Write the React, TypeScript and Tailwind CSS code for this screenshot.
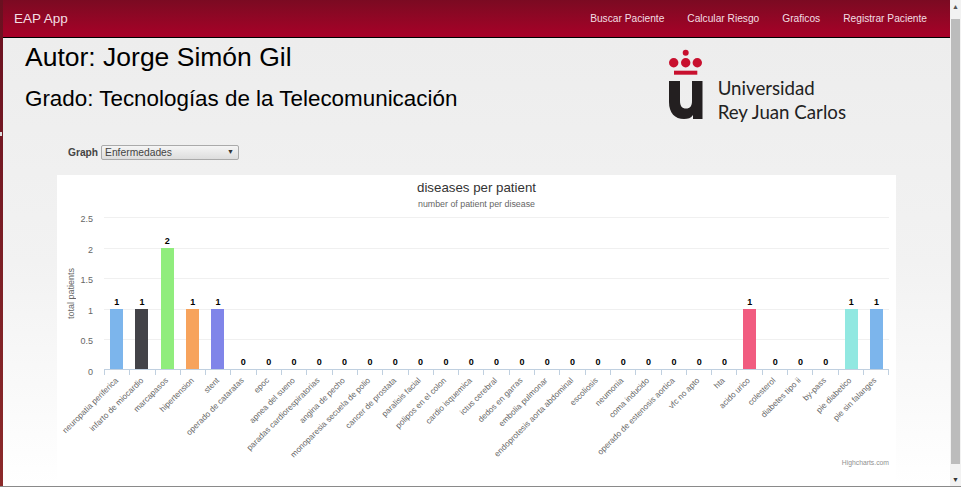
const bars: { name: string; v: number; color?: string; height?: string }[] = [
  { name: 'neuropatia periferica', v: 1, color: 'bg-[#7cb5ec]', height: 'h-[60px]' },
  { name: 'infarto de miocardio', v: 1, color: 'bg-[#434348]', height: 'h-[60px]' },
  { name: 'marcapasos', v: 2, color: 'bg-[#90ed7d]', height: 'h-[121px]' },
  { name: 'hipertension', v: 1, color: 'bg-[#f7a35c]', height: 'h-[60px]' },
  { name: 'stent', v: 1, color: 'bg-[#8085e9]', height: 'h-[60px]' },
  { name: 'operado de cataratas', v: 0 },
  { name: 'epoc', v: 0 },
  { name: 'apnea del sueno', v: 0 },
  { name: 'paradas cardiorespiratorias', v: 0 },
  { name: 'angina de pecho', v: 0 },
  { name: 'monoparesia secuela de polio', v: 0 },
  { name: 'cancer de prostata', v: 0 },
  { name: 'paralisis facial', v: 0 },
  { name: 'polipos en el colon', v: 0 },
  { name: 'cardio isquemica', v: 0 },
  { name: 'ictus cerebral', v: 0 },
  { name: 'dedos en garras', v: 0 },
  { name: 'embolia pulmonar', v: 0 },
  { name: 'endoprotesis aorta abdominal', v: 0 },
  { name: 'escoliosis', v: 0 },
  { name: 'neumonia', v: 0 },
  { name: 'coma inducido', v: 0 },
  { name: 'operado de estenosis aortica', v: 0 },
  { name: 'vfc no apto', v: 0 },
  { name: 'hta', v: 0 },
  { name: 'acido urico', v: 1, color: 'bg-[#f15c80]', height: 'h-[60px]' },
  { name: 'colesterol', v: 0 },
  { name: 'diabetes tipo ii', v: 0 },
  { name: 'by-pass', v: 0 },
  { name: 'pie diabetico', v: 1, color: 'bg-[#91e8e1]', height: 'h-[60px]' },
  { name: 'pie sin falanges', v: 1, color: 'bg-[#7cb5ec]', height: 'h-[60px]' },
];

const ticks = ['2.5', '2', '1.5', '1', '0.5', '0'];

function Chart() {
  return (
    <div className="ml-[54px] w-[839px] h-[311px] bg-white mt-[15px] pt-[5px] flex flex-col">
      <div className="text-center text-[13.3px] leading-[16px] text-[#333333]">diseases per patient</div>
      <div className="text-center text-[8.85px] leading-[12px] text-[#666666] mt-[2px]">number of patient per disease</div>
      <div className="flex mt-[7px]">
        <div className="w-[10px] ml-[9px] h-[153px] flex items-center justify-center">
          <span className="[writing-mode:vertical-rl] rotate-180 text-[9px] leading-[10px] text-[#666666] whitespace-nowrap">total patients</span>
        </div>
        <div className="w-[15px] ml-[2px] h-[163px] flex flex-col justify-between text-right text-[9px] leading-[10px] text-[#666666] mt-[-3px] mb-[-10px]">
          {ticks.map((t) => (
            <span key={t}>{t}</span>
          ))}
        </div>
        <div className="relative ml-[11px] w-[785px]">
          <div className="h-[153px] flex flex-col justify-between">
            {ticks.map((t) => (
              <div key={t} className={t === '0' ? 'h-0' : 'h-px bg-[#f0f0f0]'} />
            ))}
          </div>
          <div className="absolute left-0 top-0 w-full h-[153px] flex items-end border-b border-[#c0d0e0]">
            {bars.map((b) => (
              <div key={b.name} className="flex-1 flex flex-col items-center justify-end h-full">
                <span className="text-[9px] leading-[11px] font-bold text-black mb-[1px]">{b.v}</span>
                {b.v > 0 && <div className={`w-[13px] ${b.color} ${b.height}`} />}
              </div>
            ))}
          </div>
          <div className="absolute left-0 top-[153px] w-full flex border-r border-[#c0d0e0]">
            {bars.map((b) => (
              <div key={b.name} className="relative flex-1 h-[5px] border-l border-[#c0d0e0]">
                <span className="absolute right-[16px] top-[6px] origin-top-right -rotate-45 whitespace-nowrap text-[8.2px] leading-[10px] text-[#666666]">
                  {b.name}
                </span>
              </div>
            ))}
          </div>
        </div>
      </div>
      <div className="mt-auto mb-[18px] pr-[7px] text-right text-[6.8px] leading-[10px] text-[#909090]">Highcharts.com</div>
    </div>
  );
}

function Logo() {
  return (
    <div className="flex items-end gap-[15px]">
      <svg width="34" height="70" viewBox="0 0 34 70">
        <g fill="#c8102e">
          <circle cx="16.7" cy="3.7" r="3" />
          <circle cx="4.7" cy="13.7" r="4.7" />
          <circle cx="16.7" cy="13.7" r="4.7" />
          <circle cx="28.3" cy="13.7" r="4.7" />
          <rect x="5" y="21.7" width="23.3" height="4" />
        </g>
        <path d="M0 32H11V52C11 57 13 59.5 17 59.5C21 59.5 23 57 23 52V32H33.5V70H24V66C22 69 19 70 15 70C6 70 0 64 0 53Z" fill="#231f20" />
      </svg>
      <div className="text-[18.7px] leading-[24px] text-[#222222] font-['Lato',sans-serif] mb-[-5px]">
        <div>Universidad</div>
        <div>Rey Juan Carlos</div>
      </div>
    </div>
  );
}

export default function App() {
  return (
    <div className="relative h-[487px] w-[961px] overflow-hidden flex flex-col font-['Liberation_Sans',Arial,sans-serif] bg-white">
      <div className="flex-1 min-h-0 flex">
        <div className="w-[3px] shrink-0 bg-gradient-to-b from-[#6a1020] to-[#8c2a2a]" />
        <div className="w-[947px] flex flex-col">
          <nav className="h-[38px] shrink-0 flex items-center justify-between bg-gradient-to-b from-[#7b0a22] to-[#a80028] border-b border-black pl-[11px] pr-[23px] pt-[1px]">
            <span className="text-[13.5px] text-[#f3dfe3]">EAP App</span>
            <div className="flex gap-[23px] text-[10.2px] text-[#f3dfe3]">
              <span>Buscar Paciente</span>
              <span>Calcular Riesgo</span>
              <span>Graficos</span>
              <span>Registrar Paciente</span>
            </div>
          </nav>
          <main className="flex-1 min-h-0 flex flex-col bg-gradient-to-b from-[#ededed] via-[#f2f2f2] to-white">
            <div className="flex justify-between pl-[22px] pr-[104px] pt-[3px]">
              <div>
                <h1 className="text-[26.5px] leading-[34px] text-black mt-[-1px]">Autor: Jorge Simón Gil</h1>
                <h2 className="text-[22.4px] leading-[26px] text-black mt-[12px]">Grado: Tecnologías de la Telecomunicación</h2>
              </div>
              <div className="pt-[8px]">
                <Logo />
              </div>
            </div>
            <div className="flex items-center ml-[65px] mt-[26px] gap-[3px] h-[15px]">
              <span className="text-[10.2px] font-bold text-[#444444]">Graph</span>
              <div className="w-[138px] h-[15px] rounded-[2px] border border-[#aaaaaa] bg-gradient-to-b from-[#f5f5f5] to-[#dddddd] flex items-center justify-between px-[3px] text-[10.3px] text-[#444444]">
                <span>Enfermedades</span>
                <span className="text-[7px] text-[#333333] pr-[1px]">▼</span>
              </div>
            </div>
            <Chart />
          </main>
        </div>
        <div className="w-[11px] shrink-0 bg-[#f2f2f2] flex flex-col items-center">
          <span className="h-[19px] text-[7px] leading-[14px] text-[#555555]">▲</span>
          <div className="w-[9px] flex-1 bg-[#bcbcbc]" />
          <span className="h-[22px] text-[7px] leading-[32px] text-[#333333]">▼</span>
        </div>
      </div>
      <div className="h-px shrink-0 bg-[#8a8a8a]" />
      <div className="absolute left-0 top-[132px] w-[2px] h-[4px] bg-[#dddddd]" />
    </div>
  );
}
